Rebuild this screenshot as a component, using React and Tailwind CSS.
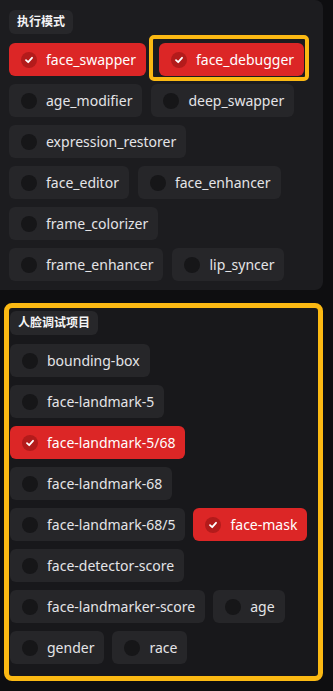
import React from 'react';

const MODES = [
  { name: 'face_swapper', checked: true },
  { name: 'face_debugger', checked: true, marked: true },
  { name: 'age_modifier' },
  { name: 'deep_swapper' },
  { name: 'expression_restorer' },
  { name: 'face_editor' },
  { name: 'face_enhancer' },
  { name: 'frame_colorizer' },
  { name: 'frame_enhancer' },
  { name: 'lip_syncer' },
];

const DEBUG_ITEMS = [
  { name: 'bounding-box' },
  { name: 'face-landmark-5' },
  { name: 'face-landmark-5/68', checked: true },
  { name: 'face-landmark-68' },
  { name: 'face-landmark-68/5' },
  { name: 'face-mask', checked: true },
  { name: 'face-detector-score' },
  { name: 'face-landmarker-score' },
  { name: 'age' },
  { name: 'gender' },
  { name: 'race' },
];

const Check = ({ checked, name, marked }) => (
  <div className={`relative ${marked ? 'ml-1' : ''}`}>
    <div
      className={`flex h-[33px] items-center gap-[9px] rounded-md pl-3 pr-[10px] text-[14px] ${
        checked ? 'bg-[#dc2626] text-white' : 'bg-[#262629] text-[#e4e4e7]'
      }`}
    >
      <span
        className={`flex h-4 w-4 items-center justify-center rounded-full ${
          checked ? 'bg-[#b31b1b]' : 'bg-[#161618]'
        }`}
      >
        {checked && (
          <svg width="10" height="10" viewBox="0 0 10 10">
            <polyline points="2,5.2 4.2,7.2 8,2.8" fill="none" stroke="#fff" strokeWidth="1.8" strokeLinecap="round" strokeLinejoin="round" />
          </svg>
        )}
      </span>
      <span>{name}</span>
    </div>
    {marked && (
      <span className="pointer-events-none absolute -bottom-[5px] -left-[10px] -right-[5px] -top-[8px] rounded-[5px] border-4 border-[#fbb913]" />
    )}
  </div>
);

const Label = ({ children }) => (
  <div className="inline-flex h-6 items-center rounded-md bg-[#27272a] px-2 text-[12px] font-bold text-[#f4f4f5]">
    {children}
  </div>
);

export default function App() {
  return (
    <div className="min-h-[691px] w-[333px] bg-[#0e0e10] pb-3 font-['Noto_Sans','Noto_Sans_CJK_SC',sans-serif]">
      {/* Processors */}
      <div className="w-[323px] rounded-r-lg bg-[#1c1c1f] pb-[9px] pl-[9px] pr-[9px] pt-2">
        <Label>执行模式</Label>
        <div className="mt-[9px] flex flex-wrap gap-x-[9px] gap-y-2">
          {MODES.map(m => (
            <Check key={m.name} {...m} />
          ))}
        </div>
      </div>

      {/* Face debugger items */}
      <div className="ml-1 mt-[13px] w-[319px] rounded-lg border-[5px] border-[#fbb913] bg-[#18181b] pb-3 pl-px pr-[9px] pt-px">
        <Label>人脸调试项目</Label>
        <div className="mt-[9px] flex flex-wrap gap-2">
          {DEBUG_ITEMS.map(m => (
            <Check key={m.name} {...m} />
          ))}
        </div>
      </div>
    </div>
  );
}
